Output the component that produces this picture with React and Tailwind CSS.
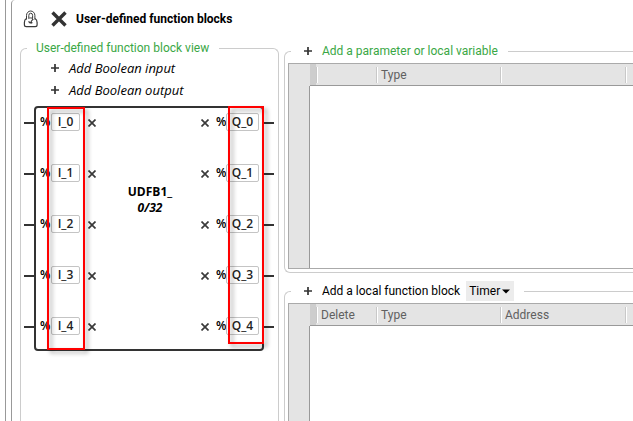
import React, { useState } from "react";

const rows = [0, 1, 2, 3, 4];

const PlusIcon = () => (
  <svg className="w-2 h-2 shrink-0" viewBox="0 0 8 8" aria-hidden="true">
    <path d="M4 0v8M0 4h8" stroke="#333" strokeWidth="1.7" />
  </svg>
);

const DeleteButton = ({ label }) => (
  <button type="button" aria-label={label} className="shrink-0">
    <svg className="w-2 h-2" viewBox="0 0 8 8">
      <path d="M0.5 0.5l7 7M7.5 0.5l-7 7" stroke="#3a3a3a" strokeWidth="1.7" />
    </svg>
  </button>
);

const LockIcon = () => (
  <svg className="w-4 h-[18px]" viewBox="0 0 16 18" fill="none" stroke="#3a3a3a">
    <path
      d="M3.500 9.500V5.500a4.200 4.500 0 0 1 8.400 0v4M5.800 8V5.500a1.900 2.300 0 0 1 3.800 0V8"
      strokeWidth="1"
    />
    <path
      d="M3.400 8.500C2 9.300 1.400 10.700 1.400 12.500v2.200c0 1.200.7 1.900 1.900 1.900h8.900c1.200 0 1.900-.7 1.900-1.900v-2.200c0-1.800-.7-3.200-2.200-4"
      strokeWidth="1.200"
    />
    <path d="M5.400 8.600C6.500 7.700 8.900 7.700 10 8.600" strokeWidth="1" />
    <path d="M5.800 11.200c.4 2.600 2.200 1.600 2.400.4.200-1.200 1.600-1.600 1.900-2.600M8 13.200l1.400-.8" strokeWidth="1.200" />
  </svg>
);

const Stubs = () => (
  <div className="flex flex-col gap-[33px] pt-2">
    {rows.map((n) => (
      <div key={n} className="flex items-center w-[10px] h-[18px]">
        <div className="w-full h-[2px] bg-[#333]" />
      </div>
    ))}
  </div>
);

const PinInput = ({ name, className }) => (
  <input
    aria-label={name}
    defaultValue={name}
    className={`h-[18px] pb-px border border-[#c4c4c4] rounded-xs text-center font-semibold text-[#222] ${className}`}
  />
);

const FunctionBlock = () => (
  <div className="flex ml-[3px] mt-[5px] [font-family:'Open_Sans',sans-serif]">
    <Stubs />
    <div className="relative flex justify-between w-[230px] h-[245px] border-2 border-[#333] rounded-[4px]">
      {/* Inputs */}
      <div className="flex flex-col gap-[33px] pt-[5px] pl-1">
        {rows.map((n) => (
          <div key={n} className="flex items-center h-[18px]">
            <span className="w-[11px] font-semibold">%</span>
            <PinInput name={`I_${n}`} className="w-[29px]" />
            <div className="flex pl-2 pt-[2px]">
              <DeleteButton label={`Delete I_${n}`} />
            </div>
          </div>
        ))}
      </div>

      <div className="flex flex-col self-start items-center pl-[3px] mt-[76px] leading-4 font-bold">
        <span>UDFB1_</span>
        <span className="italic">0/32</span>
      </div>

      {/* Outputs */}
      <div className="flex flex-col gap-[33px] pt-[5px] pr-[3px]">
        {rows.map((n) => (
          <div key={n} className="flex items-center h-[18px]">
            <div className="flex pr-[7px] pt-[2px]">
              <DeleteButton label={`Delete Q_${n}`} />
            </div>
            <span className="w-[10px] font-semibold">%</span>
            <PinInput name={`Q_${n}`} className="w-[33px]" />
          </div>
        ))}
      </div>

      {/* Highlights over the pin names */}
      <div className="absolute left-[11px] -top-px w-[38px] h-[243px] border-2 border-[#f00] drop-shadow-[3px_3px_2px_rgba(0,0,0,0.35)] pointer-events-none" />
      <div className="absolute -right-[2px] -top-[2px] w-[36px] h-[238px] border-2 border-[#f00] drop-shadow-[3px_3px_2px_rgba(0,0,0,0.35)] pointer-events-none" />
    </div>
    <Stubs />
  </div>
);

const DataTable = ({ columns, className }) => (
  <div className={`ml-[3px] border-t border-l border-[#aaa] ${className}`}>
    <table className="w-full h-full table-fixed border-separate border-spacing-0 text-left text-[#606060]">
      <colgroup>
        <col className="w-[21px]" />
        <col className="w-[6px]" />
        <col className="w-[60px]" />
        <col className="w-[124px]" />
        <col className="w-[125px]" />
        <col />
      </colgroup>
      <thead>
        <tr className="h-[22px] bg-[#e4e4e4]">
          <td />
          <td className="bg-[#cdcdcd] border-b border-[#999]" />
          {columns.map((column, i) => (
            <th key={i} scope="col" className="p-0 font-normal border-b border-[#999]">
              <div className="h-4 pl-1 leading-4 border-l border-[#c8c8c8] shadow-[inset_1px_0_0_#fff]">
                {column}
              </div>
            </th>
          ))}
        </tr>
      </thead>
      <tbody>
        <tr>
          <td className="bg-[#e4e4e4] border-r border-[#999]" />
          <td colSpan={5} className="bg-white" />
        </tr>
      </tbody>
    </table>
  </div>
);

const App = () => {
  const [blockType, setBlockType] = useState("Timer");

  return (
    <div className="flex h-screen overflow-hidden bg-white text-black text-[12px] leading-4 [font-family:Roboto,sans-serif]">
      <div className="w-[6px] shrink-0 border-r border-[#999]" />
      <main className="flex flex-col flex-1 min-w-0 ml-[5px] border-l border-[#999] rounded-tl-[4px]">
        {/* Title bar */}
        <header className="flex items-center h-[38px] pl-[11px]">
          <LockIcon />
          <button type="button" aria-label="Delete function block" className="ml-3 mr-[9px]">
            <svg className="w-4 h-4" viewBox="0 0 16 16">
              <path d="M1.500 1.500l13 13M14.500 1.500l-13 13" stroke="#333" strokeWidth="3.400" />
            </svg>
          </button>
          <h1 className="font-bold">User-defined function blocks</h1>
        </header>

        <div className="flex flex-1 min-h-0 pl-2">
          <fieldset className="w-[259px] shrink-0 mt-[2px] border border-b-0 border-[#ccc] rounded-t-[6px]">
            <legend className="ml-[6px] pl-[9px] pr-[10px] text-[#3aa745]">
              User-defined function block view
            </legend>
            <div className="flex flex-col items-start pl-[30px] pt-px text-[13px] italic [font-family:'Open_Sans',sans-serif]">
              <button type="button" className="flex items-center gap-[10px] h-[22px]">
                <PlusIcon />
                Add Boolean input
              </button>
              <button type="button" className="flex items-center gap-[10px] h-[22px]">
                <PlusIcon />
                Add Boolean output
              </button>
            </div>
            <FunctionBlock />
          </fieldset>

          <div className="flex flex-col flex-1 min-w-0 gap-2 ml-[5px] pt-[5px]">
            <fieldset className="min-w-0 border border-r-0 border-[#ccc] rounded-l-[6px]">
              <legend className="ml-[6px] pl-[13px] pr-[10px] text-[#3aa745]">
                <button type="button" className="flex items-center gap-[10px]">
                  <PlusIcon />
                  Add a parameter or local variable
                </button>
              </legend>
              <DataTable
                columns={["", "Type", "", ""]}
                className="mt-1 mb-[3px] h-[206px] border-b"
              />
            </fieldset>

            <fieldset className="flex-1 min-w-0 border border-r-0 border-b-0 border-[#ccc] rounded-tl-[6px]">
              <legend className="ml-[6px] pl-[13px] pr-[10px]">
                <div className="flex items-center">
                  <button type="button" className="flex items-center gap-[10px]">
                    <PlusIcon />
                    Add a local function block
                  </button>
                  <div className="relative ml-[6px]">
                    <select
                      aria-label="Function block type"
                      value={blockType}
                      onChange={(e) => setBlockType(e.target.value)}
                      className="block w-12 h-5 pl-[3px] appearance-none bg-[#ececec]"
                    >
                      <option>Timer</option>
                      <option>Counter</option>
                    </select>
                    <svg
                      className="absolute right-1 top-2 w-2 h-[5px] pointer-events-none"
                      viewBox="0 0 8 5"
                    >
                      <path d="M0 0.500h8L4 4.500z" fill="#000" />
                    </svg>
                  </div>
                </div>
              </legend>
              <DataTable columns={["Delete", "Type", "Address", ""]} className="mt-[2px] h-[180px]" />
            </fieldset>
          </div>
        </div>
      </main>
    </div>
  );
};

export default App;
